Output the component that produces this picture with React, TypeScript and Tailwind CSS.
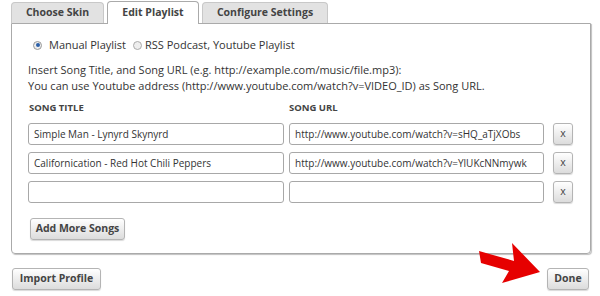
import React from "react";

const songs = [
  { title: "Simple Man - Lynyrd Skynyrd", url: "http://www.youtube.com/watch?v=sHQ_aTjXObs" },
  { title: "Californication - Red Hot Chili Peppers", url: "http://www.youtube.com/watch?v=YlUKcNNmywk" },
  { title: "", url: "" },
];

function Btn({ children, className = "" }: { children: React.ReactNode; className?: string }) {
  return (
    <button
      className={
        "h-[22px] rounded-[3px] border border-[#b4b4b4] bg-gradient-to-b from-white to-[#dcdcdc] text-[10.5px] font-bold text-[#444] shadow-[0_1px_1px_rgba(0,0,0,0.15)] " +
        className
      }
    >
      {children}
    </button>
  );
}

export default function App() {
  return (
    <div
      className="relative w-[600px] h-[296px] bg-white text-[#333] overflow-hidden"
      style={{ fontFamily: '"Open Sans", "Noto Sans", sans-serif' }}
    >
      {/* tabs */}
      <div className="flex items-end gap-[3px] pl-[11px] pt-[2px] h-[23px]">
        <div className="w-[93px] h-[21px] flex items-center justify-center rounded-t-[4px] border border-b-0 border-[#c8c8c8] bg-[#e2e2e2] text-[10.5px] font-bold text-[#444]">
          Choose Skin
        </div>
        <div className="relative z-10 w-[92px] h-[23px] mb-[-1px] flex items-center justify-center rounded-t-[4px] border border-b-0 border-[#aaa] bg-white text-[10.5px] font-bold text-[#444]">
          Edit Playlist
        </div>
        <div className="w-[126px] h-[21px] flex items-center justify-center rounded-t-[4px] border border-b-0 border-[#c8c8c8] bg-[#e2e2e2] text-[10.5px] font-bold text-[#444]">
          Configure Settings
        </div>
      </div>

      {/* panel */}
      <div className="ml-[11px] w-[580px] h-[231px] border border-[#aaa] rounded-b-[4px] shadow-[1px_1px_1px_rgba(0,0,0,0.25)] pl-[16px] pt-[13px]">
        <div className="flex items-center text-[11px] h-[16px]">
          <span className="ml-[5px] mr-[7px] w-[9px] h-[9px] rounded-full border border-[#999] bg-[#eee] flex items-center justify-center">
            <span className="w-[4px] h-[4px] rounded-full bg-[#2b5fa8]" />
          </span>
          <span>Manual Playlist</span>
          <span className="ml-[7px] mr-[3px] w-[9px] h-[9px] rounded-full border border-[#aaa] bg-[#eee]" />
          <span>RSS Podcast, Youtube Playlist</span>
        </div>

        <div className="mt-[9px] text-[11px] leading-[16px]">
          <p>Insert Song Title, and Song URL (e.g. http://example.com/music/file.mp3):</p>
          <p>You can use Youtube address (http://www.youtube.com/watch?v=VIDEO_ID) as Song URL.</p>
        </div>

        <div className="mt-[6px] flex text-[9.5px] font-bold text-[#444] h-[16px] items-center">
          <span className="w-[261px] pl-[1px]">SONG TITLE</span>
          <span>SONG URL</span>
        </div>

        <div className="mt-[7px] flex flex-col gap-[7px]">
          {songs.map((s, i) => (
            <div key={i} className="flex items-center">
              <div className="w-[256px] h-[22px] border border-[#a8a8a8] rounded-[3px] pl-[5px] text-[10px] flex items-center">
                {s.title}
              </div>
              <div className="ml-[5px] w-[255px] h-[22px] border border-[#a8a8a8] rounded-[3px] pl-[5px] text-[10px] flex items-center whitespace-nowrap">
                {s.url}
              </div>
              <Btn className="ml-[9px] w-[20px] font-normal text-[10.5px] text-[#333]">x</Btn>
            </div>
          ))}
        </div>

        <Btn className="mt-[15px] ml-[2px] w-[95px]">Add More Songs</Btn>
      </div>

      {/* footer */}
      <div className="flex justify-between pl-[12px] pr-[11px] mt-[14px]">
        <Btn className="w-[89px]">Import Profile</Btn>
        <Btn className="w-[42px]">Done</Btn>
      </div>

      {/* red arrow */}
      <svg className="absolute left-[476px] top-[240px]" width="70" height="46" viewBox="0 0 70 46">
        <polygon points="3,11 38,21 36,3 64,32 26,43 33,31 5,23" fill="#e60000" />
      </svg>
    </div>
  );
}
